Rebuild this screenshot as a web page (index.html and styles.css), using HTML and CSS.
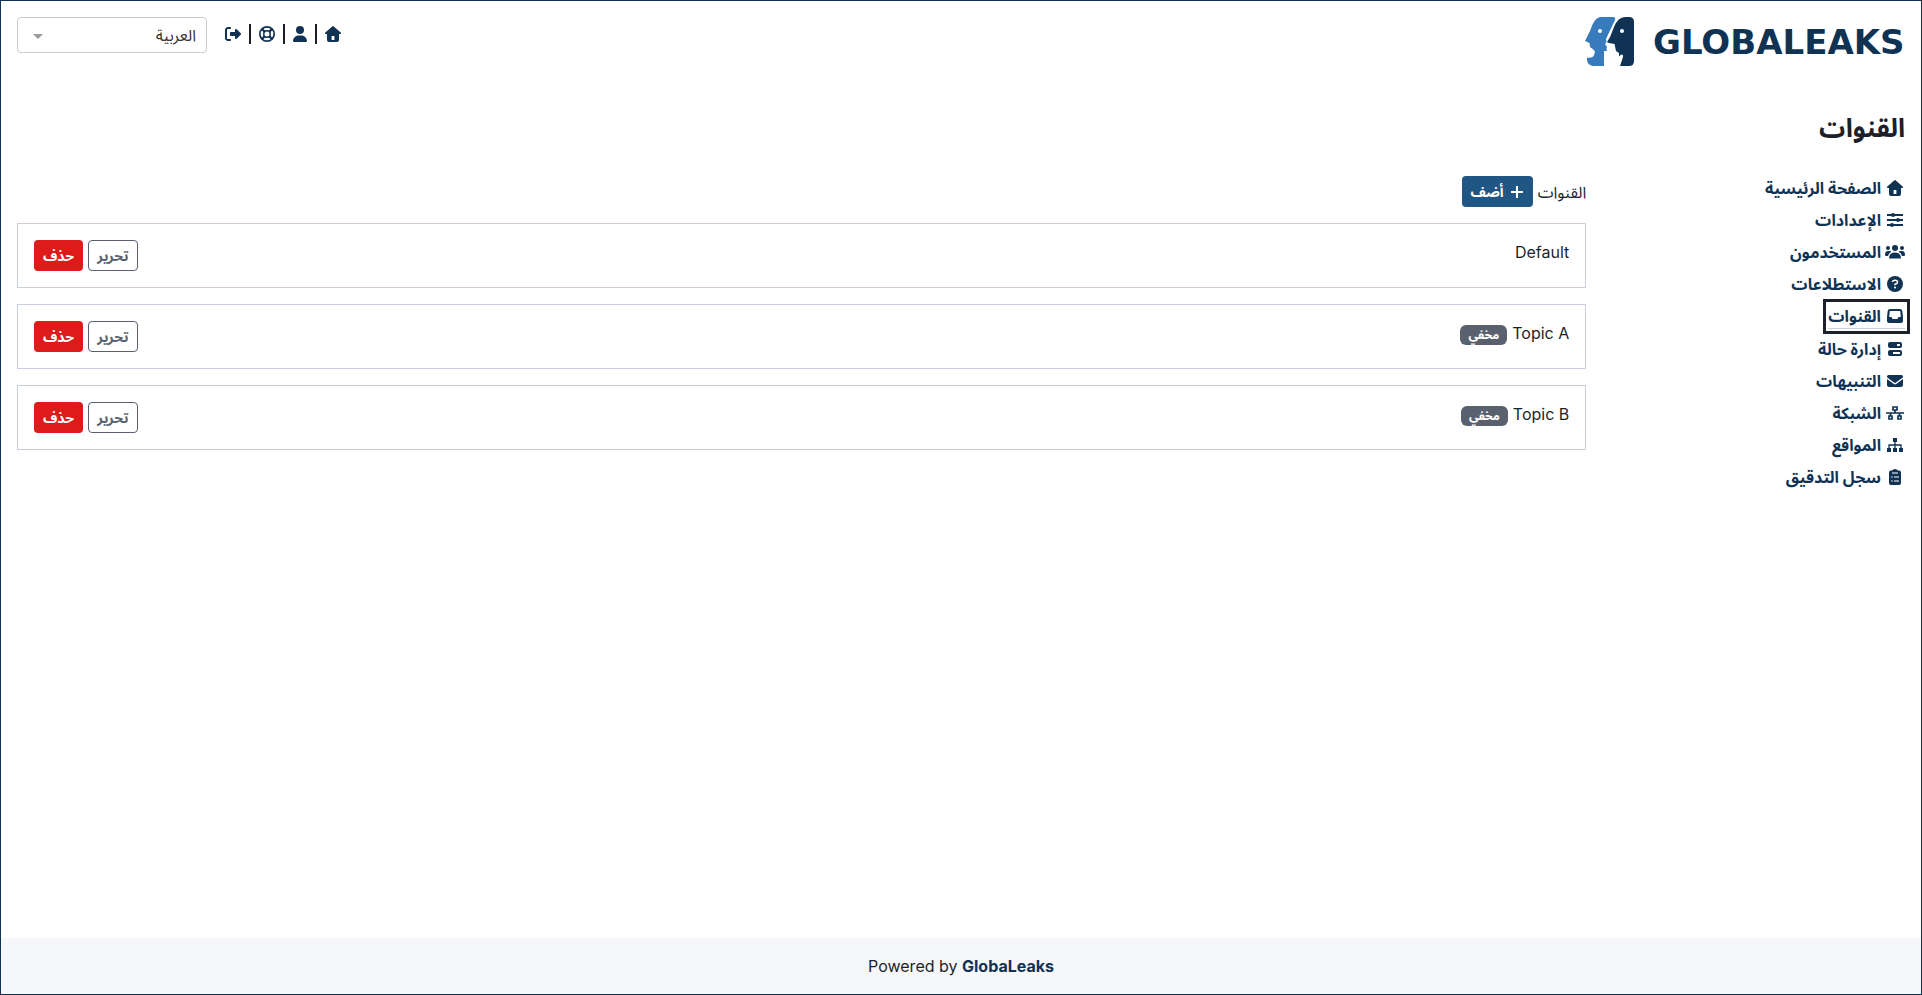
FILE: index.html
```html
<!DOCTYPE html>
<html lang="ar" dir="rtl">
<head>
    <meta charset="UTF-8">
    <meta name="viewport" content="width=device-width, initial-scale=1.0">
    <title>القنوات</title>
    <link rel="stylesheet" href="styles.css">
</head>
<body>

    <!-- Shared icons -->
    <svg class="sprite" aria-hidden="true">
        <symbol id="icon-home" viewBox="0 0 16 16"><path fill-rule="evenodd" d="M7.200.4q.8-.7 1.600 0l6.900 6.200q.5.5.2 1-.2.500-.9.500h-1V14q0 2-2 2H4q-2 0-2-2V8.100H1q-.7 0-.9-.5-.3-.5.200-1zM6.600 10v4h2.800v-4z"/></symbol>
        <symbol id="icon-user" viewBox="0 0 448 512"><path d="M224 256A128 128 0 1 0 224 0a128 128 0 1 0 0 256zm-45.700 48C79.800 304 0 383.800 0 482.300 0 498.700 13.300 512 29.700 512h388.600c16.400 0 29.700-13.300 29.700-29.700 0-98.500-79.800-178.300-178.300-178.300z"/></symbol>
        <symbol id="icon-exit" viewBox="0 0 512 512"><path d="M502.600 278.600c12.500-12.500 12.500-32.800 0-45.300l-128-128c-9.200-9.200-22.900-11.900-34.900-6.900S320 115.100 320 128v64H192c-17.700 0-32 14.300-32 32v64c0 17.700 14.300 32 32 32h128v64c0 12.900 7.800 24.600 19.800 29.600s25.700 2.200 34.900-6.900zM160 96c17.700 0 32-14.300 32-32s-14.300-32-32-32H96C43 32 0 75 0 128v256c0 53 43 96 96 96h64c17.700 0 32-14.300 32-32s-14.300-32-32-32H96c-17.700 0-32-14.300-32-32V128c0-17.700 14.300-32 32-32z"/></symbol>
        <symbol id="icon-ring" viewBox="0 0 512 512"><g fill="none" stroke="currentColor"><circle cx="256" cy="256" r="229" stroke-width="54"/><circle cx="256" cy="256" r="104" stroke-width="48"/><path d="M95 95l85 85M417 95l-85 85M95 417l85-85M417 417l-85-85" stroke-width="72"/></g></symbol>
    </svg>

    <header class="header">
        <a href="#" class="logo" aria-label="GlobaLeaks">
            <svg viewBox="0 0 320 49" direction="ltr">
                <path fill="#377bbc" d="M15 0h13q3 0 2 3L21 22l.500 3-1.500 2 2 3-.500 1.500L22 34h-3v15H8q-6-1-6-7v-1.500q6 1 7-2.500l1-3-1-2-4-3-.500-4L0 24l5-10Q9 1 15 0z"/>
                <path fill="#103253" d="M40 0h4q5 0 5 5v39q0 5-5 5h-9l3-9v-2l-2-.500-2 2V36l-3-2-1.500-7-5.500-1-2-1 3-5 4-10Q33 0 40 0z"/>
                <circle cx="15" cy="14" r="2" fill="#fff"/>
                <circle cx="37" cy="14" r="2" fill="#fff"/>
                <text x="68" y="37" class="logo-text">GLOBALEAKS</text>
            </svg>
        </a>
        <div class="toolbar">
            <nav class="user-links">
                <a href="#" aria-label="الصفحة الرئيسية"><svg class="icon"><use href="#icon-home"/></svg></a>
                <span class="divider"></span>
                <a href="#" aria-label="المستخدم"><svg class="icon icon-narrow"><use href="#icon-user"/></svg></a>
                <span class="divider"></span>
                <a href="#" aria-label="مساعدة"><svg class="icon"><use href="#icon-ring"/></svg></a>
                <span class="divider"></span>
                <a href="#" aria-label="خروج"><svg class="icon"><use href="#icon-exit"/></svg></a>
            </nav>
            <div class="language">
                <select aria-label="اللغة">
                    <option>العربية</option>
                </select>
            </div>
        </div>
    </header>

    <h1 class="page-title">القنوات</h1>

    <div class="layout">
        <nav class="sidebar">
            <a href="#"><svg class="icon"><use href="#icon-home"/></svg>الصفحة الرئيسية</a>
            <a href="#"><svg class="icon" viewBox="0 0 16 16"><path d="M0 2h16v2H0zM0 7h16v2H0zM0 12h16v2H0z"/><circle cx="6" cy="3" r="2"/><circle cx="11" cy="8" r="2"/><circle cx="5" cy="13" r="2"/></svg>الإعدادات</a>
            <a href="#"><svg class="icon icon-wide" viewBox="0 0 20 16"><circle cx="10" cy="4" r="3"/><circle cx="3" cy="4" r="2"/><circle cx="17" cy="4" r="2"/><path d="M4 14.500Q4 8.500 10 8.500t6 6zM0 11Q0 7 3 7h2q1 0 1 1-2 1-3 4H1q-1 0-1-1zM20 11q0-4-3-4h-2q-1 0-1 1 2 1 3 4h2q1 0 1-1z"/></svg>المستخدمون</a>
            <a href="#"><svg class="icon" viewBox="0 0 16 16"><circle cx="8" cy="8" r="8"/><path d="M5.500 6Q5.500 4.200 8 4.200t2.500 2Q10.500 7.500 8 8.300v1" fill="none" stroke="#fff" stroke-width="1.500"/><circle cx="8" cy="11.500" r="1" fill="#fff"/></svg>الاستطلاعات</a>
            <a href="#" class="active"><svg class="icon" viewBox="0 0 16 16"><path fill-rule="evenodd" d="M3 1h10q2 0 2.300 2L16 9v4q0 2-2 2H2q-2 0-2-2V9l.7-6Q1 1 3 1zM2.800 3L2.200 9h2.300l1 2h5l1-2h2.300L13.200 3z"/></svg>القنوات</a>
            <a href="#"><svg class="icon" viewBox="0 0 16 16"><path fill-rule="evenodd" d="M3 1h10q2 0 2 2v2q0 2-2 2H3Q1 7 1 5V3q0-2 2-2zM10 3v2h3V3zM3 9h10q2 0 2 2v2q0 2-2 2H3q-2 0-2-2v-2q0-2 2-2zM6 11v2h7v-2z"/></svg>إدارة حالة</a>
            <a href="#"><svg class="icon" viewBox="0 0 16 16"><path d="M1.500 2h13Q16 2 16 3.500q0 .8-.6 1.200L8.600 9.800q-.6.4-1.200 0L.6 4.700Q0 4.300 0 3.500 0 2 1.500 2zM0 6l6.800 5q1.200.9 2.400 0L16 6v6q0 2-2 2H2q-2 0-2-2z"/></svg>التنبيهات</a>
            <a href="#"><svg class="icon icon-mid" viewBox="0 0 18 16"><path d="M7 2h4v3H7zM3 11h3v3H3zM12 11h3v3h-3zM0 8h18M9 5v3M4.500 8v3M13.500 8v3" fill="none" stroke="currentColor" stroke-width="1.700"/></svg>الشبكة</a>
            <a href="#"><svg class="icon" viewBox="0 0 16 16"><path d="M6 1h4v4H6zM0 11h4v4H0zM6 11h4v4H6zM12 11h4v4h-4z"/><path d="M8 5v6M2 11V8h12v3" fill="none" stroke="currentColor" stroke-width="1.300"/></svg>المواقع</a>
            <a href="#"><svg class="icon" viewBox="0 0 16 16"><path d="M4 1.500h1Q6 0 8 0t3 1.500h1q2 0 2 2V14q0 2-2 2H4q-2 0-2-2V3.500q0-2 2-2z"/><path d="M5 4h6M4.200 8h1.500M7 8h5M4.200 12h1.500M7 12h5" stroke="#fff" stroke-width="1.200"/></svg>سجل التدقيق</a>
        </nav>

        <main class="content">
            <div class="content-head">
                <span>القنوات</span>
                <button type="button" class="btn btn-primary"><svg class="icon-plus" viewBox="0 0 14 14"><path d="M7 1v12M1 7h12"/></svg>أضف</button>
            </div>

            <div class="channel">
                <div class="channel-name"><span>Default</span></div>
                <div class="actions">
                    <button type="button" class="btn btn-outline">تحرير</button>
                    <button type="button" class="btn btn-danger">حذف</button>
                </div>
            </div>
            <div class="channel">
                <div class="channel-name"><span>Topic A</span><span class="badge">مخفي</span></div>
                <div class="actions">
                    <button type="button" class="btn btn-outline">تحرير</button>
                    <button type="button" class="btn btn-danger">حذف</button>
                </div>
            </div>
            <div class="channel">
                <div class="channel-name"><span>Topic B</span><span class="badge">مخفي</span></div>
                <div class="actions">
                    <button type="button" class="btn btn-outline">تحرير</button>
                    <button type="button" class="btn btn-danger">حذف</button>
                </div>
            </div>
        </main>
    </div>

    <footer class="footer" dir="ltr">
        <span>Powered by <a href="#">GlobaLeaks</a></span>
    </footer>

</body>
</html>
```
FILE: styles.css
```css
/* Reset default styles */
* {
    box-sizing: border-box;
}

body {
    display: flex;
    flex-direction: column;
    min-height: 100vh;
    margin: 0;
    border: 1px solid #103253;
    background: #fff;
    color: #1d1f2a;
    font-family: Inter, "Noto Sans Arabic", "Noto Sans", sans-serif;
    font-size: 16px;
    line-height: 24px;
}

a {
    color: #103253;
    font-weight: 700;
    text-decoration: none;
}

.sprite {
    display: none;
}

.icon {
    width: 16px;
    height: 16px;
    fill: currentColor;
}

.icon-narrow {
    width: 14px;
}

/* Header */
.header {
    display: flex;
    justify-content: space-between;
    align-items: flex-start;
    padding: 16px;
}

.logo svg {
    display: block;
    width: 320px;
    height: 49px;
}

.logo-text {
    fill: #103253;
    font-family: "DejaVu Sans", sans-serif;
    font-size: 34px;
    font-weight: 700;
}

.toolbar {
    display: flex;
    align-items: flex-start;
    gap: 18px;
}

.user-links {
    display: flex;
    align-items: center;
    gap: 8px;
    height: 34px;
}

.user-links a {
    display: flex;
}

.divider {
    width: 2px;
    height: 20px;
    background: #1d1f2a;
}

.language {
    position: relative;
}

.language select {
    display: block;
    width: 190px;
    height: 36px;
    padding: 0 10px;
    border: 1px solid #ccc;
    border-radius: 4px;
    appearance: none;
    background: #fff;
    color: #333;
    font: inherit;
}

.language::after {
    content: "";
    position: absolute;
    top: 17px;
    left: 16px;
    border: 5px solid transparent;
    border-top-color: #999;
    border-bottom: 0;
}

.page-title {
    margin: 29px 16px 31px;
    font-size: 26px;
    line-height: 34px;
}

/* Main columns */
.layout {
    display: flex;
    flex: 1;
}

.sidebar {
    display: flex;
    flex: 0 0 16.6%;
    flex-direction: column;
    align-items: flex-start;
    gap: 8px;
    padding: 0 16px;
}

.sidebar a {
    display: flex;
    align-items: center;
    gap: 4px;
}

.sidebar .icon {
    margin: 0 2px;
}

.sidebar .icon-wide {
    width: 20px;
    margin: 0;
}

.sidebar .icon-mid {
    width: 18px;
    margin: 0 1px;
}

.sidebar .active {
    border-bottom: 1px solid #c8d0e0;
    outline: 3px solid #1d1f2a;
    outline-offset: 2px;
}

.content {
    flex: 1;
    padding: 0 16px;
}

.content-head {
    display: flex;
    align-items: center;
    gap: 5px;
    margin-bottom: 16px;
}

/* Channels */
.channel {
    display: flex;
    justify-content: space-between;
    align-items: flex-start;
    margin-bottom: 16px;
    padding: 16px;
    border: 1px solid #c8d0e0;
}

.channel-name {
    display: flex;
    align-items: baseline;
    gap: 5px;
}

.badge {
    padding: 4px 8px;
    border-radius: 6px;
    background: #59616f;
    color: #fff;
    font-size: 12px;
    font-weight: 700;
    line-height: 12px;
}

.actions {
    display: flex;
    gap: 5px;
}

.btn {
    display: flex;
    align-items: center;
    gap: 6px;
    height: 31px;
    padding: 0 8px;
    border: 1px solid transparent;
    border-radius: 4px;
    color: #fff;
    font: inherit;
    font-size: 14px;
    font-weight: 700;
}

.btn-primary {
    background: #1f5683;
}

.btn-outline {
    border-color: #59616f;
    background: #fff;
    color: #59616f;
}

.btn-danger {
    background: #de1b1b;
}

.icon-plus {
    width: 14px;
    height: 14px;
    fill: none;
    stroke: currentColor;
    stroke-width: 2;
}

/* Footer */
.footer {
    padding: 16px;
    background: #f5f7fb;
    text-align: center;
}
```
